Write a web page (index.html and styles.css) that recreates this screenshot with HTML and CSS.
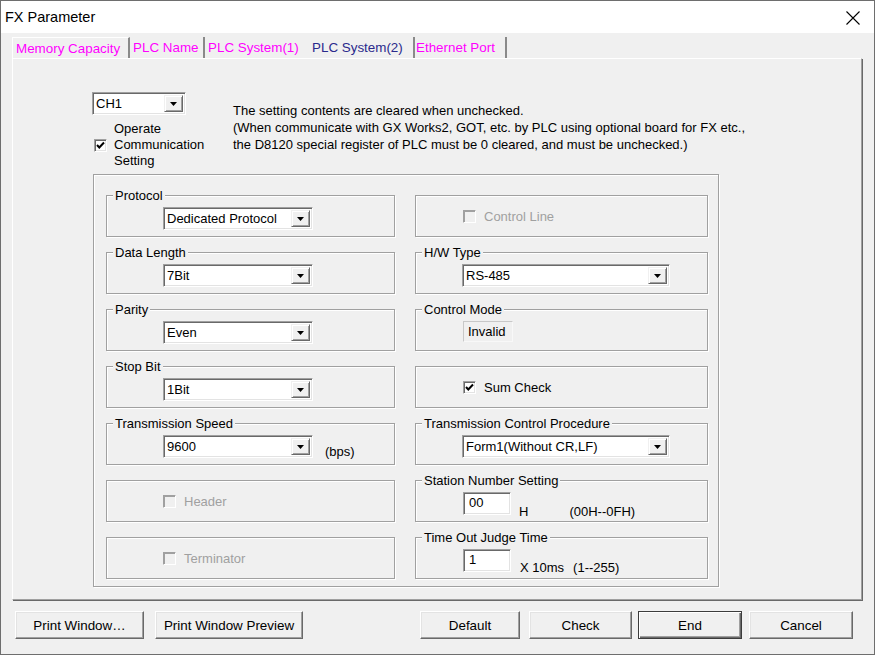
FILE: index.html
```html
<!DOCTYPE html>
<html>
<head>
<meta charset="utf-8">
<title>FX Parameter</title>
<link rel="stylesheet" href="styles.css">
</head>
<body>
<div class="window">
  <div class="titlebar">
    <span class="title">FX Parameter</span>
    <svg class="close" width="14" height="14" viewBox="0 0 14 14"><path d="M0.5 0.5L13.5 13.5M13.5 0.5L0.5 13.5" stroke="#000" stroke-width="1.1" fill="none"/></svg>
  </div>
  <div class="client">
    <div class="tabs">
      <div class="tab t1">Memory Capacity</div>
      <div class="tab t2">PLC Name</div>
      <div class="tab t3">PLC System(1)</div>
      <div class="tab t4 selected">PLC System(2)</div>
      <div class="tab t5">Ethernet Port</div>
    </div>
    <div class="page">
      <div class="top">
        <div class="topleft">
          <div class="combo ch"><span class="val">CH1</span><span class="arrow"><svg width="7" height="4" viewBox="0 0 7 4"><path d="M0 0H7L3.5 4Z"/></svg></span></div>
          <div class="opcheck">
            <span class="cb"><svg width="11" height="11" viewBox="0 0 11 11"><path d="M2 5L4.3 7.5L9 2.5" stroke="#000" stroke-width="2" fill="none"/></svg></span>
            <div class="oplabel">Operate<br>Communication<br>Setting</div>
          </div>
        </div>
        <div class="note">The setting contents are cleared when unchecked.<br>(When communicate with GX Works2, GOT, etc. by PLC using optional board for FX etc.,<br>the D8120 special register of PLC must be 0 cleared, and must be unchecked.)</div>
      </div>
      <div class="frame">
        <div class="grp left">
          <span class="glabel">Protocol</span>
          <div class="combo w150"><span class="val">Dedicated Protocol</span><span class="arrow"><svg width="7" height="4" viewBox="0 0 7 4"><path d="M0 0H7L3.5 4Z"/></svg></span></div>
        </div>
        <div class="grp right chk">
          <span class="cb disabled"></span><span class="cbtext disabled-text">Control Line</span>
        </div>

        <div class="grp left">
          <span class="glabel">Data Length</span>
          <div class="combo w150"><span class="val">7Bit</span><span class="arrow"><svg width="7" height="4" viewBox="0 0 7 4"><path d="M0 0H7L3.5 4Z"/></svg></span></div>
        </div>
        <div class="grp right">
          <span class="glabel">H/W Type</span>
          <div class="combo w208"><span class="val">RS-485</span><span class="arrow"><svg width="7" height="4" viewBox="0 0 7 4"><path d="M0 0H7L3.5 4Z"/></svg></span></div>
        </div>

        <div class="grp left">
          <span class="glabel">Parity</span>
          <div class="combo w150"><span class="val">Even</span><span class="arrow"><svg width="7" height="4" viewBox="0 0 7 4"><path d="M0 0H7L3.5 4Z"/></svg></span></div>
        </div>
        <div class="grp right">
          <span class="glabel">Control Mode</span>
          <div class="ro">Invalid</div>
        </div>

        <div class="grp left">
          <span class="glabel">Stop Bit</span>
          <div class="combo w150"><span class="val">1Bit</span><span class="arrow"><svg width="7" height="4" viewBox="0 0 7 4"><path d="M0 0H7L3.5 4Z"/></svg></span></div>
        </div>
        <div class="grp right chk">
          <span class="cb"><svg width="11" height="11" viewBox="0 0 11 11"><path d="M2 5L4.3 7.5L9 2.5" stroke="#000" stroke-width="2" fill="none"/></svg></span><span class="cbtext">Sum Check</span>
        </div>

        <div class="grp left">
          <span class="glabel">Transmission Speed</span>
          <div class="combo w150"><span class="val">9600</span><span class="arrow"><svg width="7" height="4" viewBox="0 0 7 4"><path d="M0 0H7L3.5 4Z"/></svg></span></div>
          <span class="suffix bps">(bps)</span>
        </div>
        <div class="grp right">
          <span class="glabel">Transmission Control Procedure</span>
          <div class="combo w208"><span class="val">Form1(Without CR,LF)</span><span class="arrow"><svg width="7" height="4" viewBox="0 0 7 4"><path d="M0 0H7L3.5 4Z"/></svg></span></div>
        </div>

        <div class="grp left chk">
          <span class="cb disabled"></span><span class="cbtext disabled-text">Header</span>
        </div>
        <div class="grp right">
          <span class="glabel">Station Number Setting</span>
          <div class="edit">00</div>
          <span class="suffix hx">H</span>
          <span class="suffix range1">(00H--0FH)</span>
        </div>

        <div class="grp left chk">
          <span class="cb disabled"></span><span class="cbtext disabled-text">Terminator</span>
        </div>
        <div class="grp right">
          <span class="glabel">Time Out Judge Time</span>
          <div class="edit">1</div>
          <span class="suffix ms">X 10ms</span>
          <span class="suffix range2">(1--255)</span>
        </div>
      </div>
    </div>
    <div class="buttons">
      <button class="btn b-print">Print Window…</button>
      <button class="btn b-preview">Print Window Preview</button>
      <button class="btn b-default">Default</button>
      <button class="btn b-check">Check</button>
      <button class="btn b-end defbtn">End</button>
      <button class="btn b-cancel">Cancel</button>
    </div>
  </div>
</div>
</body>
</html>
```
FILE: styles.css
```css
html, body {
  margin: 0;
  padding: 0;
  background: #f0f0f0;
}
body {
  font-family: "Liberation Sans", Arial, sans-serif;
  font-size: 13px;
  color: #000;
}
.window {
  width: 875px;
  height: 655px;
  box-sizing: border-box;
  border: 1px solid #6e6e6e;
  background: #f0f0f0;
  display: flex;
  flex-direction: column;
  overflow: hidden;
}
.titlebar {
  height: 32px;
  flex: none;
  background: #fff;
  display: flex;
  align-items: center;
  justify-content: space-between;
  padding-left: 4px;
  padding-right: 14px;
}
.title {
  font-size: 14.5px;
  color: #000;
}
.close {
  display: block;
  margin-top: 1px;
}
.client {
  flex: 1;
  display: flex;
  flex-direction: column;
}
.tabs {
  display: flex;
  margin: 4px 0 0 11px;
  height: 21px;
}
.tab {
  box-sizing: border-box;
  padding: 3px 0 0 3px;
  color: #ff00ff;
  font-size: 13.4px;
  line-height: 15px;
  white-space: nowrap;
}
.t1 {
  width: 118px;
  border-left: 1px solid #fff;
  border-top: 1px solid #fff;
  border-right: 2px solid #8a8a8a;
}
.t2 {
  width: 75px;
  border-right: 2px solid #8a8a8a;
}
.t3 {
  width: 100px;
}
.t4 {
  width: 108px;
  padding-left: 7px;
}
.t5 {
  width: 94px;
  padding-left: 1px;
  border-left: 2px solid #8a8a8a;
  border-right: 2px solid #8a8a8a;
}
.tab.selected {
  color: #2a2a8c;
}
.page {
  box-sizing: border-box;
  width: 850px;
  height: 542px;
  margin-left: 11px;
  border: 1px solid;
  border-color: #fff #a0a0a0 #a0a0a0 #fff;
  box-shadow: 1px 1px 0 #696969;
  padding: 33px 0 0 79px;
}
.top {
  display: flex;
  height: 82px;
}
.topleft {
  width: 141px;
  flex: none;
}
.combo {
  box-sizing: border-box;
  height: 23px;
  background: #fff;
  border: 1px solid;
  border-color: #a0a0a0 #fff #fff #a0a0a0;
  box-shadow: inset 1px 1px 0 #696969, inset -1px -1px 0 #e3e3e3;
  display: flex;
  align-items: stretch;
  padding: 2px 2px 2px 3px;
  flex: none;
}
.combo .val {
  flex: 1;
  line-height: 17px;
  white-space: nowrap;
  overflow: hidden;
}
.arrow {
  width: 19px;
  box-sizing: border-box;
  background: #f0f0f0;
  border: 1px solid;
  border-color: #f0f0f0 #696969 #696969 #f0f0f0;
  box-shadow: inset 1px 1px 0 #fff, inset -1px -1px 0 #a0a0a0;
  display: flex;
  align-items: center;
  justify-content: center;
}
.arrow svg {
  display: block;
  fill: #000;
}
.ch {
  width: 94px;
}
.w150 {
  width: 150px;
}
.w208 {
  width: 208px;
}
.opcheck {
  display: flex;
  align-items: center;
  margin-top: 6px;
  margin-left: 2px;
}
.oplabel {
  margin-left: 7px;
  line-height: 16px;
}
.cb {
  width: 13px;
  height: 13px;
  box-sizing: border-box;
  border: 1px solid;
  border-color: #a0a0a0 #fff #fff #a0a0a0;
  box-shadow: inset 1px 1px 0 #696969, inset -1px -1px 0 #e3e3e3;
  background: #fff;
  flex: none;
  display: flex;
  align-items: center;
  justify-content: center;
}
.cb svg {
  display: block;
}
.cb.disabled {
  background: #f0f0f0;
  box-shadow: inset 1px 1px 0 #a0a0a0;
}
.note {
  margin-top: 10px;
  line-height: 17px;
  white-space: nowrap;
}
.frame {
  box-sizing: border-box;
  width: 626px;
  height: 413px;
  margin-left: 1px;
  border: 1px solid #a0a0a0;
  box-shadow: inset 1px 1px 0 #fff, 1px 1px 0 #fff;
  padding: 20px 0 0 12px;
  display: grid;
  grid-template-columns: 289px 293px;
  grid-auto-rows: 42px;
  column-gap: 20px;
  row-gap: 15px;
}
.grp {
  position: relative;
  box-sizing: border-box;
  border: 1px solid #a0a0a0;
  box-shadow: inset 1px 1px 0 #fff, 1px 1px 0 #fff;
  display: flex;
  align-items: flex-start;
  padding-top: 11px;
}
.grp.left {
  padding-left: 56px;
}
.grp.right {
  padding-left: 46px;
}
.grp.chk {
  align-items: center;
  padding-top: 0;
}
.grp.right.chk {
  padding-left: 47px;
}
.glabel {
  position: absolute;
  top: -8px;
  left: 6px;
  padding: 0 2px;
  background: #f0f0f0;
  line-height: 15px;
  white-space: nowrap;
}
.cbtext {
  margin-left: 8px;
  line-height: 15px;
}
.disabled-text {
  color: #a0a0a0;
}
.ro {
  box-sizing: border-box;
  height: 21px;
  width: 50px;
  margin-left: 1px;
  padding: 2px 0 0 4px;
  line-height: 15px;
  border: 1px solid;
  border-color: #c8c8c8 #f8f8f8 #f8f8f8 #c8c8c8;
}
.edit {
  box-sizing: border-box;
  width: 48px;
  height: 23px;
  margin-left: 1px;
  background: #fff;
  border: 1px solid;
  border-color: #a0a0a0 #fff #fff #a0a0a0;
  box-shadow: inset 1px 1px 0 #696969, inset -1px -1px 0 #e3e3e3;
  padding: 2px 0 0 5px;
  line-height: 15px;
}
.suffix {
  align-self: flex-end;
  line-height: 15px;
  margin-bottom: 1px;
  white-space: nowrap;
}
.bps {
  margin-left: 12px;
  margin-bottom: 5px;
}
.hx {
  margin-left: 8px;
  margin-bottom: 2px;
}
.range1 {
  margin-left: 41px;
  margin-bottom: 2px;
}
.ms {
  margin-left: 9px;
  margin-bottom: 3px;
}
.range2 {
  margin-left: 9px;
  margin-bottom: 3px;
}
.buttons {
  display: flex;
  margin-top: 11px;
  padding-left: 14px;
}
.btn {
  box-sizing: border-box;
  height: 28px;
  font-family: "Liberation Sans", Arial, sans-serif;
  font-size: 13.4px;
  color: #000;
  background: #f0f0f0;
  border: 1px solid;
  border-color: #fff #696969 #696969 #fff;
  box-shadow: inset -1px -1px 0 #a0a0a0, inset 1px 1px 0 #e3e3e3;
  padding: 0;
  margin: 0;
  text-align: center;
}
.b-print {
  width: 129px;
}
.b-preview {
  width: 148px;
  margin-left: 11px;
}
.b-default {
  width: 100px;
  margin-left: 117px;
}
.b-check {
  width: 103px;
  margin-left: 9px;
}
.b-end {
  width: 104px;
  margin-left: 6px;
}
.b-cancel {
  width: 104px;
  margin-left: 7px;
}
.defbtn {
  border-color: #3c3c3c;
  box-shadow: inset 1px 1px 0 #fff, inset -1px -1px 0 #696969, inset -2px -2px 0 #a0a0a0;
}
```
